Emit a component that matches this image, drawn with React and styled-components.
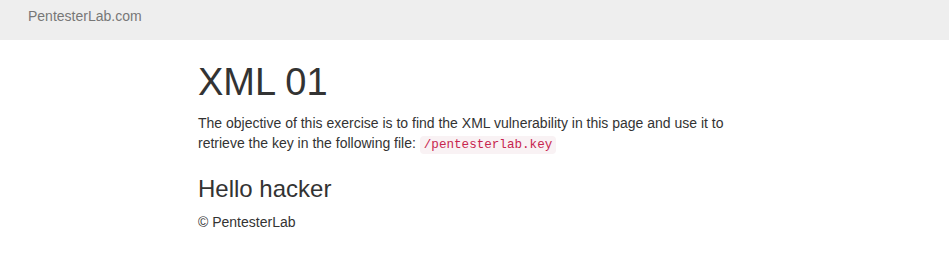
import React from 'react';
import styled, { createGlobalStyle } from 'styled-components';

const GlobalStyle = createGlobalStyle`
  * { box-sizing: border-box; }
  body {
    margin: 0;
    background: #fff;
    color: #333;
    font-family: "Liberation Sans", Arial, sans-serif;
    font-size: 14px;
    line-height: 1.42857;
  }
`;

// Top navigation bar
const Navbar = styled.nav`
  height: 40px;
  background-color: #eeeeee;
  padding: 0 28px;
  display: flex;
  align-items: flex-start;
`;

const Brand = styled.a`
  color: #777;
  font-size: 14px;
  line-height: 20px;
  padding-top: 6px;
  text-decoration: none;
`;

// Page body
const Container = styled.main`
  width: 553px;
  margin: 0 auto;
`;

const Title = styled.h1`
  font-size: 38px;
  font-weight: 500;
  line-height: 1.1;
  margin: 21.5px 0 11px;
`;

const Text = styled.p`
  margin: 0;
`;

const Code = styled.code`
  font-family: "Liberation Mono", "Courier New", monospace;
  font-size: 90%;
  color: #c7254e;
  background-color: #f9f2f4;
  padding: 2px 4px;
  border-radius: 4px;
`;

const Subtitle = styled.h3`
  font-size: 24px;
  font-weight: 500;
  line-height: 1.1;
  margin: 21px 0 10px;
`;

const Footer = styled.footer`
  font-size: 14px;
`;

const App = () => (
  <>
    <GlobalStyle />
    <Navbar>
      <Brand href="#">PentesterLab.com</Brand>
    </Navbar>
    <Container>
      <Title>XML 01</Title>
      <Text>
        The objective of this exercise is to find the XML vulnerability in this page and use it to
        retrieve the key in the following file: <Code>/pentesterlab.key</Code>
      </Text>
      <Subtitle>Hello hacker</Subtitle>
      <Footer>&copy; PentesterLab</Footer>
    </Container>
  </>
);

export default App;
